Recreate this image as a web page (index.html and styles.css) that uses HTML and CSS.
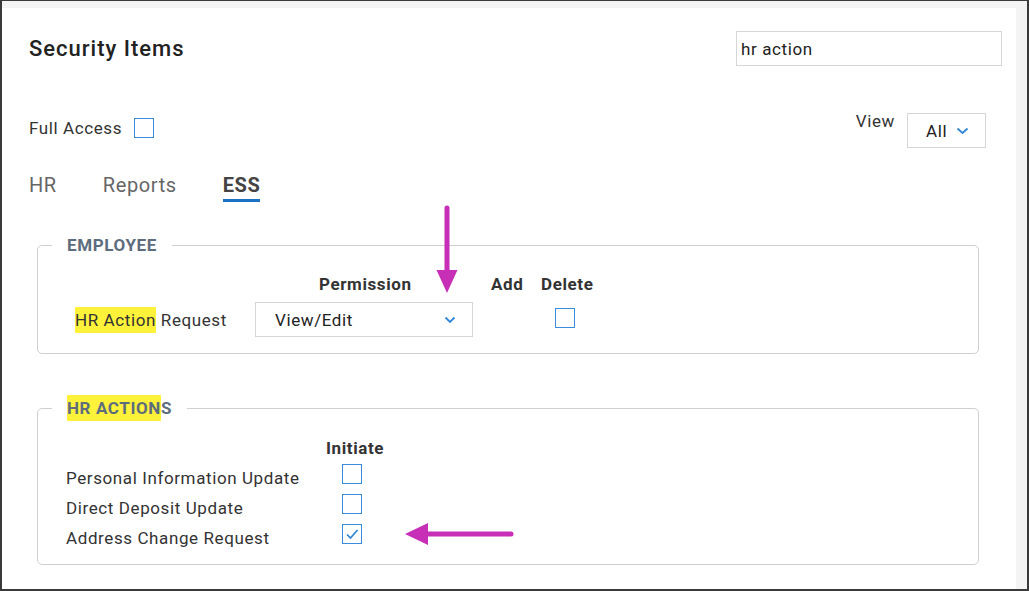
FILE: index.html
```html
<!DOCTYPE html>
<html>
<head>
<meta charset="utf-8">
<link rel="stylesheet" href="styles.css">
</head>
<body>
<div class="screen">
  <div class="card">
    <div class="head">
      <h1 class="title">Security Items</h1>
      <div class="search">hr action</div>
    </div>
    <div class="access-row">
      <div class="full-access">Full Access <span class="cb"></span></div>
      <div class="view">
        <span class="view-label">View</span>
        <div class="view-select">All <svg class="chev" width="13" height="8" viewBox="0 0 13 8"><path d="M1.5 1.5 L6.5 6 L11.5 1.5" fill="none" stroke="#2f86d6" stroke-width="1.8"/></svg></div>
      </div>
    </div>
    <div class="tabs">
      <span class="tab">HR</span>
      <span class="tab">Reports</span>
      <span class="tab active">ESS</span>
    </div>

    <fieldset class="group group-emp">
      <legend class="legend">EMPLOYEE</legend>
      <div class="emp-grid">
        <span></span>
        <span class="col-h perm-h">Permission</span>
        <span class="col-h add-h">Add</span>
        <span class="col-h del-h">Delete</span>
        <span class="row-label"><mark class="hl">HR Action</mark> Request</span>
        <div class="select">View/Edit <svg class="chev" width="12" height="8" viewBox="0 0 12 8"><path d="M1.5 1.5 L6 6 L10.5 1.5" fill="none" stroke="#2f86d6" stroke-width="1.8"/></svg></div>
        <span></span>
        <span class="cb del-cb"></span>
      </div>
    </fieldset>

    <fieldset class="group group-act">
      <legend class="legend"><mark class="hl">HR ACTION</mark>S</legend>
      <div class="act-grid">
        <span></span>
        <span class="col-h init-h">Initiate</span>
        <span class="act-label">Personal Information Update</span>
        <span class="cb"></span>
        <span class="act-label">Direct Deposit Update</span>
        <span class="cb"></span>
        <span class="act-label">Address Change Request</span>
        <span class="cb checked"><svg width="14" height="12" viewBox="0 0 14 12"><path d="M2 6.5 L5.5 10 L12.5 2" fill="none" stroke="#2f86d6" stroke-width="1.7"/></svg></span>
      </div>
    </fieldset>

    <svg class="arrow arrow-down" width="24" height="92" viewBox="0 0 24 92"><path d="M12 3 L12 68" stroke="#c62fb6" stroke-width="5" stroke-linecap="round"/><path d="M1.5 65 L22.5 65 L12 88 Z" fill="#c62fb6"/></svg>
    <svg class="arrow arrow-left" width="112" height="24" viewBox="0 0 112 24"><path d="M22 12 L108 12" stroke="#c62fb6" stroke-width="5" stroke-linecap="round"/><path d="M2 12 L25 1 L25 23 Z" fill="#c62fb6"/></svg>
  </div>
</div>
</body>
</html>
```

FILE: styles.css
```css
* { box-sizing: border-box; }
html, body { margin: 0; padding: 0; }
body {
  width: 1029px;
  height: 591px;
  font-family: Roboto, "Liberation Sans", Arial, sans-serif;
  color: #2b2b2b;
  overflow: hidden;
}
.screen {
  width: 1029px;
  height: 591px;
  border: 2px solid #3a3a3a;
  border-top-width: 1px;
  background: #f4f4f4;
  padding: 7px 11px 0 0;
}
.card {
  position: relative;
  background: #fff;
  height: 100%;
  padding: 22px 14px 0 27px;
}
.head {
  display: flex;
  justify-content: space-between;
  align-items: flex-start;
}
.title {
  margin: 6px 0 0;
  font-size: 22px;
  font-weight: 500;
  color: #222;
  letter-spacing: 1px;
}
.search {
  width: 266px;
  height: 35px;
  margin-top: 1px;
  border: 1px solid #d6d6d6;
  padding: 7px 4px;
  font-size: 17px;
  letter-spacing: 0.6px;
  color: #222;
}
.access-row {
  display: flex;
  justify-content: space-between;
  align-items: flex-start;
  margin-top: 48px;
}
.full-access {
  display: flex;
  align-items: center;
  gap: 12px;
  font-size: 17px;
  letter-spacing: 0.6px;
  color: #333;
  margin-top: 4px;
}
.cb {
  display: inline-flex;
  align-items: center;
  justify-content: center;
  width: 20px;
  height: 20px;
  border: 1.5px solid #3b8ddb;
  background: #fff;
}
.view {
  display: flex;
  align-items: flex-start;
  gap: 12px;
  margin-right: 16px;
}
.view-label {
  font-size: 17px;
  letter-spacing: 0.6px;
  color: #333;
  margin-top: -3px;
}
.view-select {
  display: flex;
  align-items: center;
  gap: 9px;
  width: 79px;
  height: 35px;
  margin-top: -1px;
  border: 1px solid #d6d6d6;
  padding: 0 0 0 18px;
  font-size: 17px;
  letter-spacing: 0.6px;
  color: #222;
}
.tabs {
  display: flex;
  margin-top: 25px;
}
.tab {
  font-size: 20px;
  letter-spacing: 0.6px;
  color: #666;
  padding-bottom: 2px;
  margin-right: 46px;
}
.tab.active {
  color: #444;
  font-weight: 700;
  border-bottom: 3px solid #1b72c4;
}
.group {
  margin: 0;
  padding: 0;
  border: 1px solid #cfcfcf;
  border-radius: 5px;
  width: 942px;
  margin-left: 8px;
}
.legend {
  font-size: 17px;
  letter-spacing: 0.6px;
  font-weight: 700;
  color: #5d6d7d;
  padding: 0 15px;
  margin-left: 14px;
}
.hl {
  background: #fff23a;
  color: inherit;
  padding: 3px 0;
}
.group-emp {
  margin-top: 33px;
  height: 119px;
}
.emp-grid {
  display: grid;
  grid-template-columns: 180px 218px 68px auto;
  align-items: center;
  row-gap: 8px;
  padding: 19px 0 0 37px;
}
.col-h {
  font-size: 17px;
  letter-spacing: 0.6px;
  font-weight: 700;
  color: #333;
}
.perm-h { padding-left: 64px; }
.add-h { padding-left: 18px; }
.row-label {
  font-size: 17px;
  letter-spacing: 0.6px;
  color: #333;
}
.select {
  display: flex;
  align-items: center;
  justify-content: space-between;
  height: 35px;
  border: 1px solid #d6d6d6;
  padding: 0 16px 0 19px;
  font-size: 17px;
  letter-spacing: 0.6px;
  color: #222;
}
.del-cb { margin-left: 14px; margin-top: -4px; }
.group-act {
  margin-top: 44px;
  height: 167px;
}
.act-grid {
  display: grid;
  grid-template-columns: 276px auto;
  align-items: center;
  row-gap: 10px;
  padding: 20px 0 0 28px;
  justify-items: start;
}
.init-h { margin-left: -16px; margin-bottom: -4px; }
.act-label {
  font-size: 17px;
  line-height: 20px;
  letter-spacing: 0.6px;
  color: #333;
  margin: 4px 0 -4px;
}
.arrow { position: absolute; }
.arrow-down { left: 433px; top: 197px; }
.arrow-left { left: 401px; top: 514px; }
```
